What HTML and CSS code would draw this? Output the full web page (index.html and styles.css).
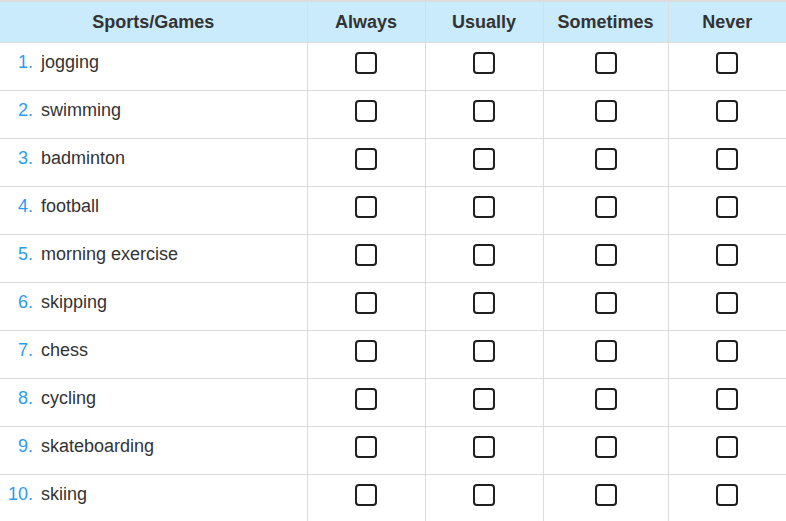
FILE: index.html
```html
<!DOCTYPE html>
<html lang="en">
<head>
<meta charset="utf-8">
<title>Sports/Games</title>
<link rel="stylesheet" href="styles.css">
</head>
<body>
<table class="survey">
  <colgroup>
    <col class="c-name">
    <col class="c-opt">
    <col class="c-opt">
    <col class="c-wide">
    <col class="c-opt">
  </colgroup>
  <thead>
    <tr>
      <th>Sports/Games</th>
      <th>Always</th>
      <th>Usually</th>
      <th>Sometimes</th>
      <th>Never</th>
    </tr>
  </thead>
  <tbody>
    <tr><td class="name"><span class="num">1.</span><span>jogging</span></td><td><span class="box"></span></td><td><span class="box"></span></td><td><span class="box"></span></td><td><span class="box"></span></td></tr>
    <tr><td class="name"><span class="num">2.</span><span>swimming</span></td><td><span class="box"></span></td><td><span class="box"></span></td><td><span class="box"></span></td><td><span class="box"></span></td></tr>
    <tr><td class="name"><span class="num">3.</span><span>badminton</span></td><td><span class="box"></span></td><td><span class="box"></span></td><td><span class="box"></span></td><td><span class="box"></span></td></tr>
    <tr><td class="name"><span class="num">4.</span><span>football</span></td><td><span class="box"></span></td><td><span class="box"></span></td><td><span class="box"></span></td><td><span class="box"></span></td></tr>
    <tr><td class="name"><span class="num">5.</span><span>morning exercise</span></td><td><span class="box"></span></td><td><span class="box"></span></td><td><span class="box"></span></td><td><span class="box"></span></td></tr>
    <tr><td class="name"><span class="num">6.</span><span>skipping</span></td><td><span class="box"></span></td><td><span class="box"></span></td><td><span class="box"></span></td><td><span class="box"></span></td></tr>
    <tr><td class="name"><span class="num">7.</span><span>chess</span></td><td><span class="box"></span></td><td><span class="box"></span></td><td><span class="box"></span></td><td><span class="box"></span></td></tr>
    <tr><td class="name"><span class="num">8.</span><span>cycling</span></td><td><span class="box"></span></td><td><span class="box"></span></td><td><span class="box"></span></td><td><span class="box"></span></td></tr>
    <tr><td class="name"><span class="num">9.</span><span>skateboarding</span></td><td><span class="box"></span></td><td><span class="box"></span></td><td><span class="box"></span></td><td><span class="box"></span></td></tr>
    <tr><td class="name"><span class="num">10.</span><span>skiing</span></td><td><span class="box"></span></td><td><span class="box"></span></td><td><span class="box"></span></td><td><span class="box"></span></td></tr>
  </tbody>
</table>
</body>
</html>
```
FILE: styles.css
```css
html, body {
  margin: 0;
  padding: 0;
  background: #fff;
}
body {
  font-family: "Liberation Sans", Arial, sans-serif;
  color: #333;
  font-size: 18px;
}
.survey {
  width: 786px;
  border-collapse: collapse;
  table-layout: fixed;
  border-top: 2px solid #dcdcdc;
}
.c-name { width: 307px; }
.c-opt { width: 118px; }
.c-wide { width: 125px; }
.survey th {
  background: #c9ebfc;
  font-weight: bold;
  color: #333;
  height: 40px;
  line-height: 40px;
  padding: 0;
  text-align: center;
  border-bottom: 1px solid #dcdcdc;
  border-left: 1px solid #dcdcdc;
}
.survey th:first-child,
.survey td:first-child {
  border-left: none;
}
.survey td {
  padding: 9px 0 14px;
  line-height: 24px;
  vertical-align: top;
  text-align: center;
  border-bottom: 1px solid #dcdcdc;
  border-left: 1px solid #dcdcdc;
}
.survey td.name {
  text-align: left;
  padding: 7px 0 16px;
}
.num {
  display: inline-block;
  width: 33px;
  margin-right: 8px;
  text-align: right;
  color: #2d9cf0;
}
.box {
  display: inline-block;
  vertical-align: top;
  width: 22px;
  height: 22px;
  box-sizing: border-box;
  border: 2px solid #1f1f1f;
  border-radius: 4px;
  background: #fff;
}
```
